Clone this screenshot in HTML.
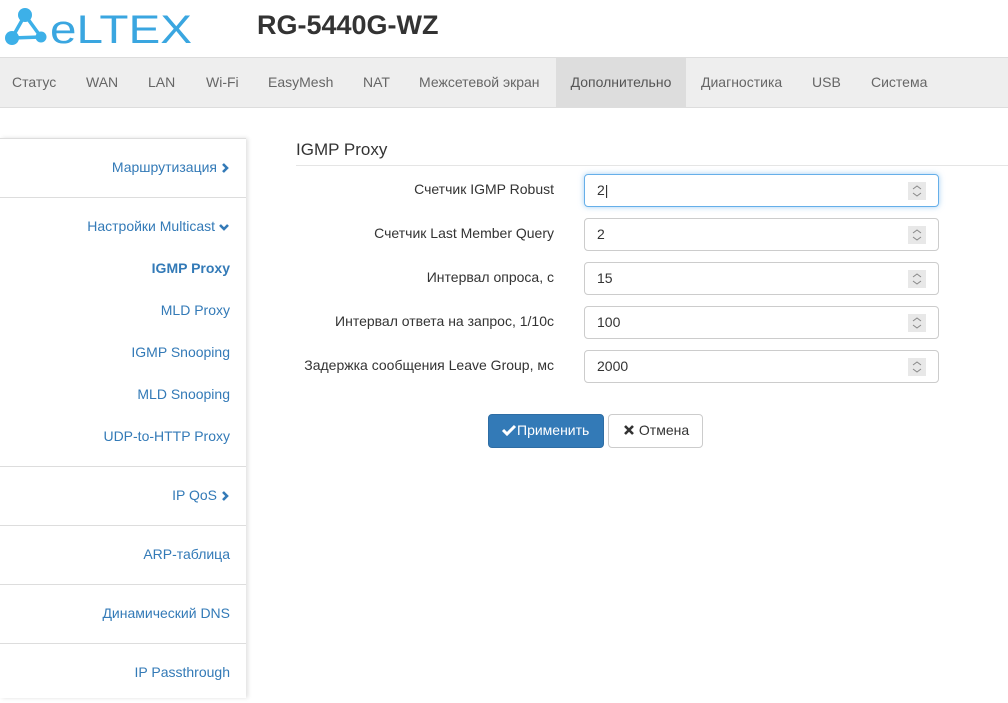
<!DOCTYPE html>
<html><head><meta charset="utf-8"><style>
*{box-sizing:border-box;margin:0;padding:0}
body{width:1008px;height:703px;overflow:hidden;background:#fff;font-family:"Liberation Sans",sans-serif;font-size:14px;color:#333;position:relative}
.nav{position:absolute;left:0;top:57px;width:1008px;height:51px;background:#eee;border-top:1px solid #ddd;border-bottom:1px solid #ddd}
.nav span{position:absolute;top:0;height:49px;line-height:48px;color:#666;font-size:14px}
.side{position:absolute;left:0;top:138px;width:246px;height:560px;box-shadow:2px 0 4px rgba(0,0,0,.12)}
.side div{position:absolute;right:16px;color:#337ab7;font-size:14px;text-align:right}
.side svg{vertical-align:middle;margin-left:3px}
.hr{position:absolute;left:0;width:246px;height:1px;background:#ddd}
.lbl{position:absolute;right:454px;font-size:14px;color:#333}
.inp{position:absolute;left:584px;width:355px;height:33px;border:1px solid #ccc;border-radius:4px;padding-left:12px;line-height:31px;font-size:14px}
.sp{position:absolute;right:12px;top:7px;width:18px;height:18px;background:#e8e8e8}
</style></head><body>
<svg width="0" height="0" style="position:absolute"><defs>
<g id="spin"><path d="M5 7 L9 4 L13 7 M5 11 L9 14 L13 11" fill="none" stroke="#888" stroke-width="1"/></g>
</defs></svg>
<svg style="position:absolute;left:0;top:0" width="200" height="52">
<g stroke="#3db0e8" stroke-width="3.5"><line x1="25" y1="15" x2="12" y2="38"/><line x1="25" y1="15" x2="41" y2="37"/><line x1="12" y1="38" x2="41" y2="37"/></g>
<circle cx="25" cy="15" r="7" fill="#3db0e8"/><circle cx="12" cy="38" r="7" fill="#3db0e8"/><circle cx="41" cy="37" r="5.5" fill="#3db0e8"/>
<text x="50" y="43" font-family="Liberation Sans" font-size="40" fill="#3aa6e0" textLength="142" lengthAdjust="spacingAndGlyphs">eLTEX</text>
</svg>
<div style="position:absolute;left:257px;top:10px;font-size:27px;font-weight:bold;color:#333">RG-5440G-WZ</div>
<div class="nav">
<span style="left:12px">Статус</span><span style="left:86px">WAN</span><span style="left:148px">LAN</span><span style="left:206px">Wi-Fi</span><span style="left:268px">EasyMesh</span><span style="left:363px">NAT</span><span style="left:419px">Межсетевой экран</span>
<span style="left:556px;width:130px;background:#ddd;text-align:center;color:#555">Дополнительно</span>
<span style="left:701px">Диагностика</span><span style="left:812px">USB</span><span style="left:871px">Система</span>
</div>
<div class="side">
<div class="hr" style="top:0"></div>
<div style="top:21px">Маршрутизация<svg width="10" height="12"><path d="M3 2 L7 6 L3 10" fill="none" stroke="#337ab7" stroke-width="2.6"/></svg></div>
<div class="hr" style="top:59px"></div>
<div style="top:80px">Настройки Multicast<svg width="12" height="10"><path d="M2 3 L6 7 L10 3" fill="none" stroke="#337ab7" stroke-width="2.6"/></svg></div>
<div style="top:122px;font-weight:bold">IGMP Proxy</div>
<div style="top:164px">MLD Proxy</div>
<div style="top:206px">IGMP Snooping</div>
<div style="top:248px">MLD Snooping</div>
<div style="top:290px">UDP-to-HTTP Proxy</div>
<div class="hr" style="top:328px"></div>
<div style="top:349px">IP QoS<svg width="10" height="12"><path d="M3 2 L7 6 L3 10" fill="none" stroke="#337ab7" stroke-width="2.6"/></svg></div>
<div class="hr" style="top:387px"></div>
<div style="top:408px">ARP-таблица</div>
<div class="hr" style="top:446px"></div>
<div style="top:467px">Динамический DNS</div>
<div class="hr" style="top:505px"></div>
<div style="top:526px">IP Passthrough</div>
</div>
<div style="position:absolute;left:296px;top:140px;font-size:17px;color:#333">IGMP Proxy</div>
<div style="position:absolute;left:296px;top:165px;width:712px;height:1px;background:#e5e5e5"></div>
<div class="lbl" style="top:181px">Счетчик IGMP Robust</div>
<div class="inp" style="top:174px;border-color:#66afe9;box-shadow:0 0 6px rgba(102,175,233,.6)">2|<svg class="sp"><use href="#spin"/></svg></div>
<div class="lbl" style="top:225px">Счетчик Last Member Query</div>
<div class="inp" style="top:218px">2<svg class="sp"><use href="#spin"/></svg></div>
<div class="lbl" style="top:269px">Интервал опроса, с</div>
<div class="inp" style="top:262px">15<svg class="sp"><use href="#spin"/></svg></div>
<div class="lbl" style="top:313px">Интервал ответа на запрос, 1/10с</div>
<div class="inp" style="top:306px">100<svg class="sp"><use href="#spin"/></svg></div>
<div class="lbl" style="top:357px">Задержка сообщения Leave Group, мс</div>
<div class="inp" style="top:350px">2000<svg class="sp"><use href="#spin"/></svg></div>
<div style="position:absolute;left:488px;top:414px;width:116px;height:34px;background:#337ab7;border:1px solid #2e6da4;border-radius:4px;color:#fff;line-height:31px;padding-left:12px"><svg width="16" height="12" style="vertical-align:-1px"><path d="M2 6 L6 10 L14 2" fill="none" stroke="#fff" stroke-width="3"/></svg>Применить</div>
<div style="position:absolute;left:608px;top:414px;width:95px;height:34px;background:#fff;border:1px solid #ccc;border-radius:4px;color:#333;line-height:31px;padding-left:14px"><svg width="12" height="12" style="vertical-align:-1px"><path d="M2 2 L10 10 M10 2 L2 10" stroke="#333" stroke-width="2.6"/></svg> Отмена</div>
</body></html>
